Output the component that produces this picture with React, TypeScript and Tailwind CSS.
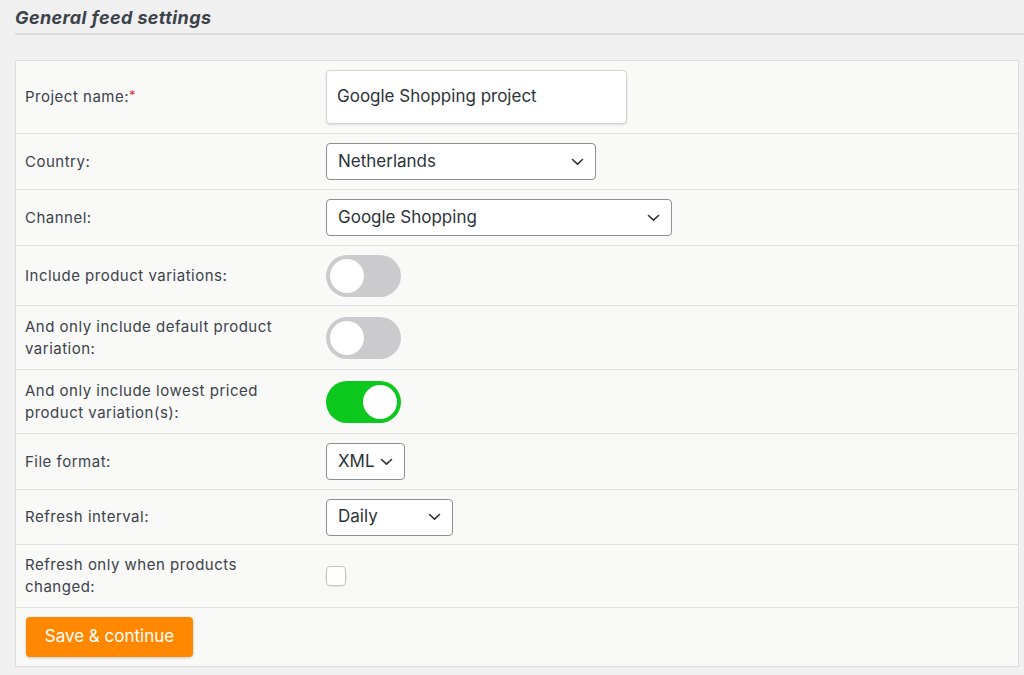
import React from "react";

function Chevron() {
  return (
    <svg width="13" height="8" viewBox="0 0 13 8" fill="none" className="shrink-0">
      <path d="M1.5 1.5L6.5 6.2L11.5 1.5" stroke="#2c3338" strokeWidth="1.6" strokeLinecap="round" strokeLinejoin="round" />
    </svg>
  );
}

function Select({ value, width }: { value: string; width: string }) {
  return (
    <div
      className={`${width} h-[37px] flex items-center justify-between pl-[11px] pr-[11px] bg-white border border-[#8c8f94] rounded-[4px] text-[17px] text-[#2c3338]`}
    >
      <span>{value}</span>
      <Chevron />
    </div>
  );
}

function Toggle({ on }: { on: boolean }) {
  return (
    <div
      className={`w-[75px] h-[42px] rounded-full p-[4px] flex ${on ? "bg-[#0cc71c] justify-end" : "bg-[#cbcbcd] justify-start"}`}
    >
      <div className="w-[34px] h-[34px] rounded-full bg-white" />
    </div>
  );
}

function Row({ label, height, children, last }: { label: React.ReactNode; height: string; children: React.ReactNode; last?: boolean }) {
  return (
    <div className={`grid grid-cols-[310px_1fr] ${height} ${last ? "" : "border-b border-[#e2e2e4]"}`}>
      <div className="flex items-center pl-[9px] pr-[45px] text-[15px] leading-[22px] tracking-[0.5px] text-[#3c434a]">{label}</div>
      <div className="flex items-center">{children}</div>
    </div>
  );
}

export default function App() {
  return (
    <div className="min-h-screen bg-[#f0f0f1] font-['Inter',sans-serif] overflow-hidden">
      <div className="pl-[15px]">
        <h2 className="h-[35px] pt-[6px] text-[18px] font-bold italic leading-[24px] tracking-[0.4px] text-[#3c434a] border-b-2 border-[#dcdcde]">
          General feed settings
        </h2>
      </div>
      <div className="mt-[25px] ml-[15px] w-[1004px] border border-[#dcdcde] bg-[#f9f9f8]">
        <Row
          height="h-[73px]"
          label={
            <span>
              Project name:<span className="text-[#d63638] text-[13px] align-top relative -top-[2px]">*</span>
            </span>
          }
        >
          <div className="w-[301px] h-[54px] flex items-center pl-[10px] bg-white border border-[#d4d4d6] rounded-[4px] shadow-[0_1px_2px_rgba(0,0,0,0.12)] text-[17px] text-[#2c3338]">
            Google Shopping project
          </div>
        </Row>
        <Row height="h-[56px]" label="Country:">
          <Select value="Netherlands" width="w-[270px]" />
        </Row>
        <Row height="h-[56px]" label="Channel:">
          <Select value="Google Shopping" width="w-[346px]" />
        </Row>
        <Row height="h-[60px]" label="Include product variations:">
          <Toggle on={false} />
        </Row>
        <Row height="h-[64px]" label="And only include default product variation:">
          <Toggle on={false} />
        </Row>
        <Row height="h-[64px]" label="And only include lowest priced product variation(s):">
          <Toggle on={true} />
        </Row>
        <Row height="h-[56px]" label="File format:">
          <Select value="XML" width="w-[79px]" />
        </Row>
        <Row height="h-[55px]" label="Refresh interval:">
          <Select value="Daily" width="w-[127px]" />
        </Row>
        <Row height="h-[63px]" label="Refresh only when products changed:">
          <div className="w-[20px] h-[20px] bg-white border border-[#c3c4c7] rounded-[4px] shadow-[0_1px_2px_rgba(0,0,0,0.08)]" />
        </Row>
        <div className="h-[58px] flex items-center pl-[10px]">
          <button className="w-[167px] h-[40px] rounded-[4px] bg-[#ff8800] text-white text-[17px] shadow-[0_1px_3px_rgba(0,0,0,0.2)]">
            Save &amp; continue
          </button>
        </div>
      </div>
    </div>
  );
}
